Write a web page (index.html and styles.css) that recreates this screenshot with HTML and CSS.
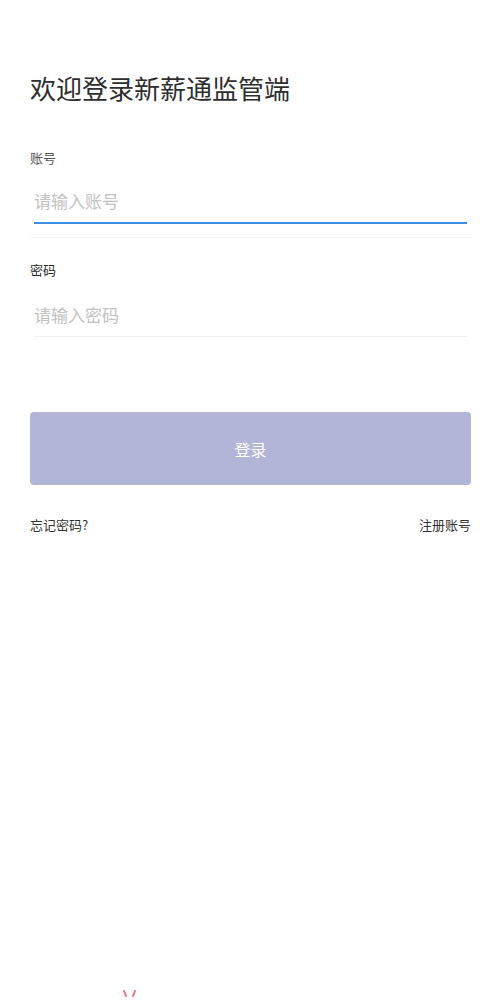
FILE: index.html
```html
<!DOCTYPE html>
<html lang="zh-CN">
<head>
    <meta charset="UTF-8">
    <meta name="viewport" content="width=device-width, initial-scale=1.0">
    <title>欢迎登录新薪通监管端</title>
    <link rel="stylesheet" href="styles.css">
</head>
<body>
    <div class="page">
        <h1 class="title">欢迎登录新薪通监管端</h1>

        <div class="field field-active">
            <label class="field-label" for="account">账号</label>
            <input class="field-input" type="text" id="account" placeholder="请输入账号">
        </div>

        <div class="field">
            <label class="field-label field-label-dark" for="password">密码</label>
            <input class="field-input" type="password" id="password" placeholder="请输入密码">
        </div>

        <button class="login-btn" type="button">登录</button>

        <div class="links">
            <a class="link" href="#">忘记密码?</a>
            <a class="link" href="#">注册账号</a>
        </div>

        <div class="footer-mark">
            <svg width="16" height="8" viewBox="0 0 16 8">
                <path d="M2 1 L4 6" stroke="#e6395a" stroke-width="2" stroke-linecap="round" opacity="0.7"/>
                <path d="M13 1 L11 6" stroke="#e6395a" stroke-width="2" stroke-linecap="round" opacity="0.7"/>
            </svg>
        </div>
    </div>
</body>
</html>
```

FILE: styles.css
```css
body {
    margin: 0;
    background-color: #ffffff;
    font-family: "Noto Sans CJK SC", "Noto Sans", sans-serif;
    color: #333333;
}
.page {
    padding: 0 29px 0 30px;
}
.title {
    margin: 70px 0 0;
    font-size: 26px;
    line-height: 36px;
    font-weight: 400;
    color: #2e2e2e;
}
.field {
    margin-top: 43px;
    padding-bottom: 13px;
    border-bottom: 1px solid #f4f4f4;
}
.field + .field {
    margin-top: 23px;
    padding-bottom: 0;
    border-bottom: none;
}
.field-label {
    display: block;
    font-size: 13px;
    line-height: 18px;
    color: #555555;
    margin-bottom: 11px;
}
.field-label-dark {
    color: #2a2a2a;
    margin-bottom: 14px;
}
.field-input {
    display: block;
    width: calc(100% - 8px);
    margin: 0 4px;
    height: 43px;
    padding: 0;
    border: none;
    border-bottom: 1px solid #f0f0f0;
    outline: none;
    font-family: "Noto Sans CJK SC", "Noto Sans", sans-serif;
    font-size: 17px;
    color: #333333;
    background: transparent;
}
.field-active .field-input {
    height: 44px;
    border-bottom: 2px solid #3d8fe6;
}
.field-input::placeholder {
    color: #c2c2c2;
}
.login-btn {
    display: block;
    width: 100%;
    height: 73px;
    margin-top: 75px;
    border: none;
    border-radius: 4px;
    background-color: #b3b5d8;
    color: #ffffff;
    font-family: "Noto Sans CJK SC", "Noto Sans", sans-serif;
    font-size: 16px;
    cursor: pointer;
}
.links {
    display: flex;
    justify-content: space-between;
    margin-top: 31px;
}
.link {
    font-size: 13px;
    line-height: 18px;
    color: #333333;
    text-decoration: none;
}
.footer-mark {
    margin-top: 456px;
    padding-left: 92px;
    height: 8px;
    line-height: 0;
}
```
